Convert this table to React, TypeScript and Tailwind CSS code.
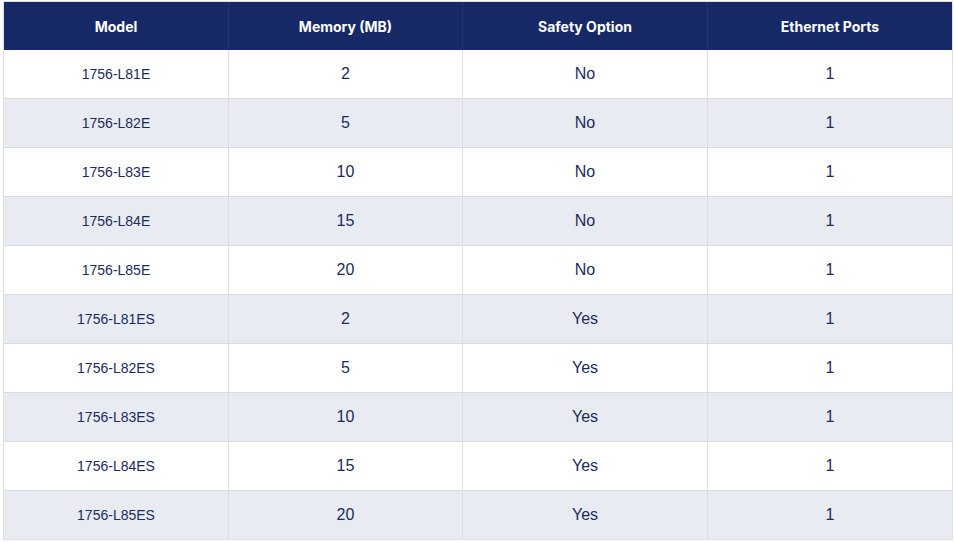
const rows = [
  { model: "1756-L81E", memory: "2", safety: "No", ports: "1" },
  { model: "1756-L82E", memory: "5", safety: "No", ports: "1" },
  { model: "1756-L83E", memory: "10", safety: "No", ports: "1" },
  { model: "1756-L84E", memory: "15", safety: "No", ports: "1" },
  { model: "1756-L85E", memory: "20", safety: "No", ports: "1" },
  { model: "1756-L81ES", memory: "2", safety: "Yes", ports: "1" },
  { model: "1756-L82ES", memory: "5", safety: "Yes", ports: "1" },
  { model: "1756-L83ES", memory: "10", safety: "Yes", ports: "1" },
  { model: "1756-L84ES", memory: "15", safety: "Yes", ports: "1" },
  { model: "1756-L85ES", memory: "20", safety: "Yes", ports: "1" },
];

const headers = ["Model", "Memory (MB)", "Safety Option", "Ethernet Ports"];

export default function App() {
  return (
    <div className="min-h-screen bg-white pl-[3px] pt-[1px]" style={{ fontFamily: "'Liberation Sans', Arial, sans-serif" }}>
      <div className="w-[950px] border border-[#dcdfe5]">
        {/* Header */}
        <div className="grid h-[48px] grid-cols-[224px_234px_245px_1fr] bg-[#162966] text-white">
          {headers.map((h, i) => (
            <div
              key={h}
              className={`flex items-center justify-center text-[14px] font-bold ${i > 0 ? "border-l border-[#22346f]" : ""}`}
              style={{ fontFamily: "Inter, 'Noto Sans', sans-serif" }}
            >
              {h}
            </div>
          ))}
        </div>

        {/* Body */}
        {rows.map((r, idx) => (
          <div
            key={r.model}
            className={`grid grid-cols-[224px_234px_245px_1fr] text-[#1b2b5c] ${
              idx % 2 === 1 ? "bg-[#e8ebf2]" : "bg-white"
            } ${idx > 0 ? "h-[49px] border-t border-[#d8dbe3]" : "h-[48px]"}`}
          >
            <div className="flex items-center justify-center text-[14px]">{r.model}</div>
            <div className="flex items-center justify-center border-l border-[#dcdfe5] text-[16px]">{r.memory}</div>
            <div className="flex items-center justify-center border-l border-[#dcdfe5] text-[16px]">{r.safety}</div>
            <div className="flex items-center justify-center border-l border-[#dcdfe5] text-[16px]">{r.ports}</div>
          </div>
        ))}
      </div>
    </div>
  );
}
